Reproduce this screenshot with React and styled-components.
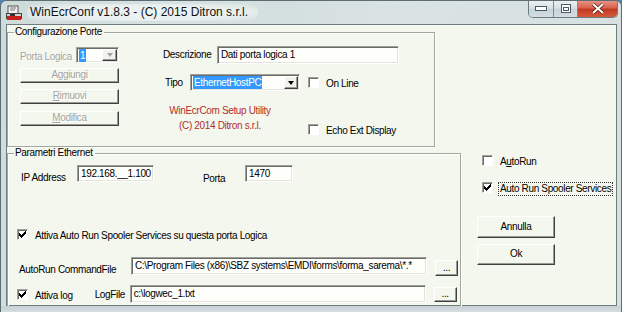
import React from 'react';
import styled, { createGlobalStyle } from 'styled-components';

const GlobalStyle = createGlobalStyle`
  html, body { margin: 0; padding: 0; background: #4f86b9; }
  * { box-sizing: border-box; }
  body {
    font-family: "Liberation Sans", Arial, sans-serif;
    font-size: 10px;
    letter-spacing: -0.35px;
    color: #000;
  }
`;

// --- window chrome ---
const Window = styled.div`
  width: 622px; height: 312px;
  display: flex; flex-direction: column;
  border: 1px solid #5d6e72; border-bottom: none;
  border-radius: 6px 6px 0 0;
  background: linear-gradient(105deg, #cfdadb 0%, #d8e2e2 25%, #d3dede 40%, #dae3e3 55%, #d6e0e0 100%);
  overflow: hidden;
`;

const TitleBar = styled.div`
  height: 23px; display: flex; align-items: flex-start;
  padding-left: 5px;
`;

const TitleIcon = styled.svg`
  margin-top: 4px; flex: none;
`;

const TitleText = styled.div`
  margin: 3px 0 0 5px; padding: 1px 10px 2px 3px;
  font-size: 12px; letter-spacing: 0; color: #111;
  border-radius: 10px;
  background: radial-gradient(ellipse at center, rgba(236,242,242,0.95) 55%, rgba(236,242,242,0) 100%);
`;

const Caption = styled.div`
  margin-left: auto; margin-right: 3px; margin-top: -1px;
  display: flex; height: 18px;
  border: 1px solid #6b7b80; border-top: none;
  border-radius: 0 0 5px 5px; overflow: hidden;
`;

const CapBtn = styled.div`
  width: ${p => p.$w}px; height: 100%;
  display: flex; align-items: center; justify-content: center;
  background: ${p => p.$close
    ? 'linear-gradient(#e79a8c 0%, #d9634f 45%, #c23a24 55%, #d45a3c 100%)'
    : 'linear-gradient(#eef3f5 0%, #d9e2e7 45%, #c7d3da 55%, #d3dde3 100%)'};
  border-left: ${p => p.$first ? 'none' : '1px solid #7d8c92'};
`;

const FrameRow = styled.div`
  flex: 1; display: flex; min-height: 0;
`;

const SideFrame = styled.div`
  width: ${p => p.$w}px; flex: none;
`;

const BottomFrame = styled.div`
  height: 6px; flex: none;
  background: linear-gradient(#c8d3d5, #d4dddf);
`;

const Client = styled.div`
  width: 611px; flex: none;
  border: 1px solid #6f7d80;
  background: #f4f7ee;
  display: flex; flex-direction: column;
`;

// --- controls ---
const Group = styled.fieldset`
  margin: ${p => p.$mt || 0}px 0 0 0; padding: 0 0 ${p => p.$pb || 0}px 0;
  width: ${p => p.$w}px; min-width: 0;
  border: 1px solid #a3a79c;
  box-shadow: inset 1px 1px 0 #fff, 1px 1px 0 #fff;
`;

const Legend = styled.legend`
  margin-left: 6px; padding: 0 2px 0 1px;
  line-height: 12px; font-size: 10px;
`;

const Row = styled.div`
  display: flex; align-items: ${p => p.$align || 'flex-start'};
  margin-top: ${p => p.$mt || 0}px;
  padding-left: ${p => p.$pl || 0}px;
`;

const Col = styled.div`
  display: flex; flex-direction: column;
  width: ${p => (p.$w ? `${p.$w}px` : 'auto')};
  margin-left: ${p => p.$ml || 0}px;
`;

const Label = styled.span`
  display: block; line-height: 12px; white-space: nowrap;
  width: ${p => (p.$w ? `${p.$w}px` : 'auto')};
  margin-top: ${p => p.$mt || 0}px;
  margin-left: ${p => p.$ml || 0}px;
  color: ${p => (p.$disabled ? '#a5a5a0' : '#000')};
  text-shadow: ${p => (p.$disabled ? '1px 1px 0 #fff' : 'none')};
`;

const Field = styled.div`
  width: ${p => p.$w}px; height: ${p => p.$h}px; flex: none;
  margin-left: ${p => p.$ml || 0}px;
  border: 1px solid; border-color: #a0a09a #fff #fff #a0a09a;
  box-shadow: inset 1px 1px 0 #6a6a66, inset -1px -1px 0 #e4e4dc;
  background: #fefefa;
  display: flex; align-items: center;
  padding: 0 2px 0 3px;
  line-height: 12px; white-space: nowrap; overflow: hidden;
`;

const Selected = styled.span`
  background: #3399ff; color: #fff; padding: 0 1px; line-height: 13px;
  margin-left: -1px;
`;

const DropBtn = styled.div`
  margin-left: auto; margin-right: -1px;
  width: ${p => p.$w || 14}px; height: calc(100% - 2px);
  border: 1px solid; border-color: #fff #404040 #404040 #fff;
  box-shadow: inset -1px -1px 0 #9a9a94;
  background: #f1f3ec;
  display: flex; align-items: center; justify-content: center;
`;

const Arrow = styled.span`
  width: 0; height: 0;
  border-left: 3.5px solid transparent; border-right: 3.5px solid transparent;
  border-top: 4px solid ${p => (p.$disabled ? '#a5a5a0' : '#000')};
`;

const Button = styled.div`
  width: ${p => p.$w}px; height: ${p => p.$h}px; flex: none;
  margin-top: ${p => p.$mt || 0}px;
  margin-left: ${p => p.$ml || 0}px;
  border: 1px solid; border-color: #fff #404040 #404040 #fff;
  box-shadow: inset -1px -1px 0 #9a9a94;
  background: #f4f7ee;
  display: flex; align-items: center; justify-content: center;
  line-height: 12px; padding-bottom: 1px;
  color: ${p => (p.$disabled ? '#a5a5a0' : '#000')};
  text-shadow: ${p => (p.$disabled ? '1px 1px 0 #fff' : 'none')};
`;

const CheckRow = styled.div`
  display: flex; align-items: center; height: 13px;
  margin-top: ${p => p.$mt || 0}px;
  margin-left: ${p => p.$ml || 0}px;
`;

const Box = styled.div`
  width: 11px; height: 11px; flex: none;
  border: 1px solid; border-color: #a0a09a #fff #fff #a0a09a;
  box-shadow: inset 1px 1px 0 #6a6a66;
  background: #fff;
  display: flex; align-items: center; justify-content: center;
`;

const CheckText = styled.span`
  margin-left: 5px; line-height: 12px; white-space: nowrap;
  padding: 0 1px;
  border: 1px dotted ${p => (p.$focus ? '#333' : 'transparent')};
  margin-top: 2px;
`;

const RedText = styled.div`
  margin: 12px 0 0 6px; width: 102px;
  text-align: center; line-height: 15px;
  color: #b3302b;
`;

const AppIcon = () => (
  <TitleIcon width="16" height="16" viewBox="0 0 16 16">
    <rect x="2" y="1" width="10" height="8" fill="#f2f2f2" stroke="#555" />
    <path d="M4 3h6M4 5h5" stroke="#777" />
    <rect x="0.5" y="8.5" width="15" height="5" fill="#d0d0d0" stroke="#444" />
    <rect x="1" y="11" width="14" height="4" fill="#c8201c" />
    <rect x="4" y="9" width="5" height="2" fill="#333" />
  </TitleIcon>
);

const Check = ({ on }) => (
  <Box>
    {on && (
      <svg width="7" height="7" viewBox="0 0 7 7">
        <path d="M0 2h1v1h1v1h1v-1h1v-1h1v-1h1v-1h1v3h-1v1h-1v1h-1v1h-1v1h-1v-1h-1v-1h-1z" fill="#000" />
      </svg>
    )}
  </Box>
);

export default function App() {
  return (
    <>
      <GlobalStyle />
      <Window>
        <TitleBar>
          <AppIcon />
          <TitleText>WinEcrConf v1.8.3 - (C) 2015 Ditron s.r.l.</TitleText>
          <Caption>
            <CapBtn $w={24} $first>
              <svg width="12" height="5"><rect x="0.5" y="0.5" width="11" height="4" fill="#fff" stroke="#4d5a60" /></svg>
            </CapBtn>
            <CapBtn $w={24}>
              <svg width="10" height="9"><rect x="0.5" y="0.5" width="9" height="8" fill="#fff" stroke="#4d5a60" /><rect x="2.5" y="3.5" width="5" height="3" fill="none" stroke="#4d5a60" /></svg>
            </CapBtn>
            <CapBtn $w={40} $close>
              <svg width="14" height="11" viewBox="0 0 14 11">
                <path d="M2 1l10 9M12 1L2 10" stroke="#5a1a10" strokeWidth="3.4" />
                <path d="M2 1l10 9M12 1L2 10" stroke="#fff" strokeWidth="2" />
              </svg>
            </CapBtn>
          </Caption>
        </TitleBar>

        <FrameRow>
          <SideFrame $w={5} />
          <Client>
            <Group $w={428} $mt={1} $pb={10}>
              <Legend>Configurazione Porte</Legend>
              <Row $pl={12} $mt={8}>
                <Col $w={100}>
                  <Row $align="flex-end" $mt={1}>
                    <Label $w={56} $disabled>Porta Logica</Label>
                    <Field $w={43} $h={16}>
                      <Selected>1</Selected>
                      <DropBtn $w={15}><Arrow $disabled /></DropBtn>
                    </Field>
                  </Row>
                  <Button $w={99} $h={15} $mt={5} $disabled>Aggiungi</Button>
                  <Button $w={99} $h={15} $mt={6} $disabled><span><u>R</u>imuovi</span></Button>
                  <Button $w={99} $h={15} $mt={7} $disabled><span><u>M</u>odifica</span></Button>
                </Col>
                <Col $ml={43} $w={236}>
                  <Row $align="center">
                    <Label $w={54}>Descrizione</Label>
                    <Field $w={182} $h={18}>Dati porta logica 1</Field>
                  </Row>
                  <Row $mt={10}>
                    <Col $w={137}>
                      <Row $align="center">
                        <Label $ml={2} $w={25}>Tipo</Label>
                        <Field $w={110} $h={17}>
                          <Selected>EthernetHostPC</Selected>
                          <DropBtn><Arrow /></DropBtn>
                        </Field>
                      </Row>
                      <RedText>
                        WinEcrCom Setup Utility<br />(C) 2014 Ditron s.r.l.
                      </RedText>
                    </Col>
                    <Col $ml={8}>
                      <CheckRow $mt={2}>
                        <Check />
                        <CheckText>On Line</CheckText>
                      </CheckRow>
                      <CheckRow $mt={34}>
                        <Check />
                        <CheckText>Echo Ext Display</CheckText>
                      </CheckRow>
                    </Col>
                  </Row>
                </Col>
              </Row>
            </Group>

            <Row>
              <Group $w={454} $pb={4}>
                <Legend>Parametri Ethernet</Legend>
                <Row $pl={13} $mt={6}>
                  <Label $w={56} $mt={7}>IP Address</Label>
                  <Field $w={77} $h={17}>192.168.__1.100</Field>
                  <Label $ml={49} $w={42} $mt={8}>Porta</Label>
                  <Field $w={48} $h={17}>1470</Field>
                </Row>
                <CheckRow $ml={9} $mt={43}>
                  <Check on />
                  <CheckText>Attiva Auto Run Spooler Services su questa porta Logica</CheckText>
                </CheckRow>
                <Row $pl={11} $mt={16}>
                  <Label $w={112} $mt={7}>AutoRun CommandFile</Label>
                  <Field $w={296} $h={18}>C:\Program Files (x86)\SBZ systems\EMDI\forms\forma_sarema\*.*</Field>
                  <Button $w={23} $h={16} $ml={8} $mt={3}>...</Button>
                </Row>
                <Row $pl={9} $mt={9}>
                  <CheckRow $mt={3}>
                    <Check on />
                    <CheckText>Attiva log</CheckText>
                  </CheckRow>
                  <Label $ml={20} $w={35} $mt={4}>LogFile</Label>
                  <Field $w={296} $h={18}>c:\logwec_1.txt</Field>
                  <Button $w={23} $h={15} $ml={8} $mt={2}>...</Button>
                </Row>
              </Group>
              <Col $ml={16} $w={135}>
                <CheckRow $ml={5} $mt={7}>
                  <Check />
                  <CheckText>A<u>u</u>toRun</CheckText>
                </CheckRow>
                <CheckRow $ml={5} $mt={14}>
                  <Check on />
                  <CheckText $focus>Auto Run Spooler Services</CheckText>
                </CheckRow>
                <Button $w={78} $h={22} $mt={22}>Annulla</Button>
                <Button $w={78} $h={21} $mt={6}>Ok</Button>
              </Col>
            </Row>
          </Client>
          <SideFrame $w={4} />
        </FrameRow>
        <BottomFrame />
      </Window>
    </>
  );
}
